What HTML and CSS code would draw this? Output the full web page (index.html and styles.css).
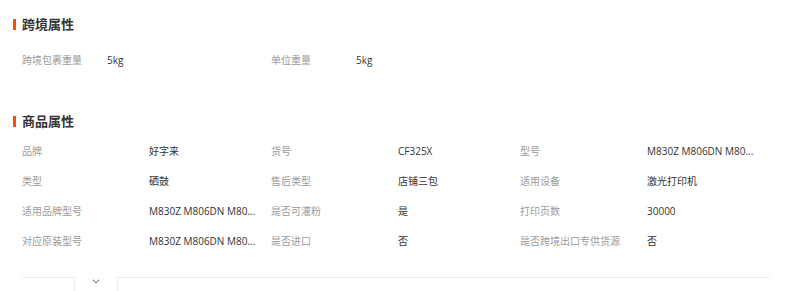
FILE: index.html
```html
<!DOCTYPE html>
<html lang="zh-CN">
<head>
<meta charset="utf-8">
<title>属性</title>
<link rel="stylesheet" href="styles.css">
</head>
<body>
<div class="page">
  <div class="section-title t1">跨境属性</div>
  <div class="attr-row">
    <div class="attr short"><span class="label">跨境包裹重量</span><span class="value">5kg</span></div>
    <div class="attr short"><span class="label">单位重量</span><span class="value">5kg</span></div>
  </div>

  <div class="section-title t2">商品属性</div>
  <div class="attr-grid">
    <div class="attr"><span class="label">品牌</span><span class="value">好字来</span></div>
    <div class="attr"><span class="label">货号</span><span class="value">CF325X</span></div>
    <div class="attr"><span class="label">型号</span><span class="value">M830Z M806DN M80...</span></div>

    <div class="attr"><span class="label">类型</span><span class="value">硒鼓</span></div>
    <div class="attr"><span class="label">售后类型</span><span class="value">店铺三包</span></div>
    <div class="attr"><span class="label">适用设备</span><span class="value">激光打印机</span></div>

    <div class="attr"><span class="label">适用品牌型号</span><span class="value">M830Z M806DN M80...</span></div>
    <div class="attr"><span class="label">是否可灌粉</span><span class="value">是</span></div>
    <div class="attr"><span class="label">打印页数</span><span class="value">30000</span></div>

    <div class="attr"><span class="label">对应原装型号</span><span class="value">M830Z M806DN M80...</span></div>
    <div class="attr"><span class="label">是否进口</span><span class="value">否</span></div>
    <div class="attr"><span class="label">是否跨境出口专供货源</span><span class="value">否</span></div>
  </div>

  <div class="tabs">
    <div class="tab-left"></div>
    <div class="tab-toggle">
      <svg width="8" height="5" viewBox="0 0 8 5"><polyline points="0.8,0.8 4,3.8 7.2,0.8" fill="none" stroke="#9a9a9a" stroke-width="1.2"/></svg>
    </div>
    <div class="tab-right"></div>
  </div>
</div>
</body>
</html>
```

FILE: styles.css
```css
html, body {
  margin: 0;
  padding: 0;
  background: #fff;
}
body {
  font-family: "Open Sans", "Noto Sans CJK SC", "Liberation Sans", sans-serif;
  font-size: 10px;
  color: #333;
  height: 291px;
  overflow: hidden;
}
.page {
  padding: 14px 0 0 13px;
}
.section-title {
  display: flex;
  align-items: center;
  height: 20px;
  line-height: 20px;
  font-size: 13px;
  font-weight: bold;
  color: #333;
}
.section-title::before {
  content: "";
  display: block;
  width: 3px;
  height: 11px;
  background: #ff4a00;
  margin-right: 6px;
}
.t2 {
  margin-top: 36px;
}
.attr-row {
  display: flex;
  margin: 11px 0 0 9px;
}
.attr {
  display: flex;
  width: 249px;
  height: 30px;
  line-height: 30px;
}
.label {
  color: #9b9b9b;
  width: 127px;
  flex: none;
  white-space: nowrap;
}
.short .label {
  width: 85px;
}
.value {
  color: #333;
  white-space: nowrap;
}
.attr-grid {
  display: grid;
  grid-template-columns: 249px 249px 249px;
  margin: 5px 0 0 9px;
}
.tabs {
  display: flex;
  margin: 21px 0 0 9px;
  width: 748px;
  height: 20px;
}
.tab-left {
  width: 52px;
  border-top: 1px solid #ebebeb;
  border-right: 1px solid #ebebeb;
}
.tab-toggle {
  width: 42px;
  display: flex;
  justify-content: center;
  padding-top: 2px;
  height: 6px;
}
.tab-toggle svg {
  display: block;
}
.tab-right {
  flex: 1;
  border-top: 1px solid #ebebeb;
  border-left: 1px solid #ebebeb;
}
```
